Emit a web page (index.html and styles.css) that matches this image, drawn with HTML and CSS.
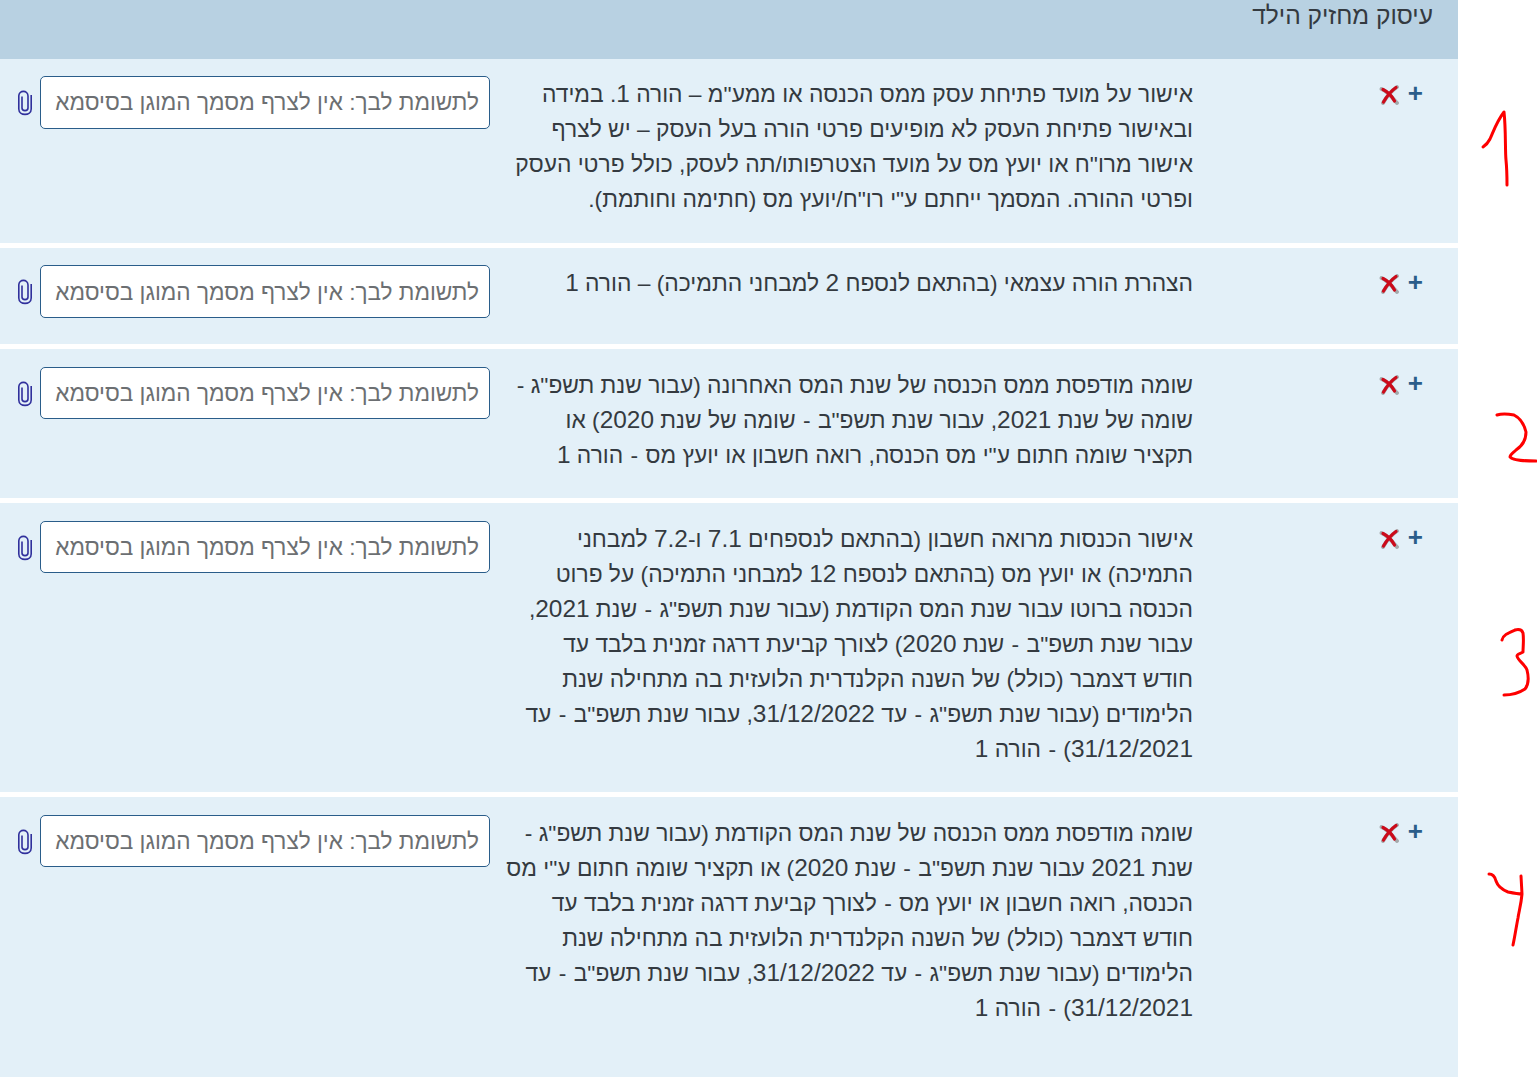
FILE: index.html
```html
<!DOCTYPE html>
<html lang="he" dir="rtl">
<head>
<meta charset="utf-8">
<title>עיסוק מחזיק הילד</title>
<link rel="stylesheet" href="styles.css">
</head>
<body>
<svg width="0" height="0" class="defs" aria-hidden="true">
  <defs>
    <symbol id="del" viewBox="0 0 20 20">
      <path d="M4 18 C8 11 12 6 18 2 M2.5 4 C8 6 13 12 18 18" fill="none" stroke="#8a8a8a" stroke-width="3.8" stroke-linecap="round" opacity=".7"/>
      <path d="M4.5 17 C8 11 12 6 17 2.5 M4 4.5 C9 7 13 11 15.5 16" fill="none" stroke="#cc0a1a" stroke-width="3.2" stroke-linecap="round"/>
    </symbol>
    <symbol id="clip" viewBox="0 0 16 26">
      <path d="M14.2 5 V19 C14.2 26.2 1.8 26.2 1.8 19 V6 C1.8 -.2 11 -.2 11 6 V18 C11 21.5 5 21.5 5 18 V6.5" fill="none" stroke="#30309c" stroke-width="1.6"/>
    </symbol>
  </defs>
</svg>
<main class="page">
  <header class="title-bar"><h1 class="title">עיסוק מחזיק הילד</h1></header>

  <section class="row">
    <div class="actions"><span class="plus">+</span><svg class="del"><use href="#del"/></svg></div>
    <p class="desc">אישור על מועד פתיחת עסק ממס הכנסה או ממע"מ – הורה <span class="num">1</span>. במידה<br>ובאישור פתיחת העסק לא מופיעים פרטי הורה בעל העסק – יש לצרף<br>אישור מרו"ח או יועץ מס על מועד הצטרפותו/תה לעסק, כולל פרטי העסק<br>ופרטי ההורה. המסמך ייחתם ע"י רו"ח/יועץ מס (חתימה וחותמת).</p>
    <input class="note" type="text" placeholder="לתשומת לבך: אין לצרף מסמך המוגן בסיסמא">
    <svg class="clip"><use href="#clip"/></svg>
  </section>

  <section class="row">
    <div class="actions"><span class="plus">+</span><svg class="del"><use href="#del"/></svg></div>
    <p class="desc">הצהרת הורה עצמאי (בהתאם לנספח <span class="num">2</span> למבחני התמיכה) – הורה <span class="num">1</span></p>
    <input class="note" type="text" placeholder="לתשומת לבך: אין לצרף מסמך המוגן בסיסמא">
    <svg class="clip"><use href="#clip"/></svg>
  </section>

  <section class="row">
    <div class="actions"><span class="plus">+</span><svg class="del"><use href="#del"/></svg></div>
    <p class="desc">שומה מודפסת ממס הכנסה של שנת המס האחרונה (עבור שנת תשפ"ג -<br>שומה של שנת <span class="num">2021</span>, עבור שנת תשפ"ב <span class="dash">-</span> שומה של שנת <span class="num">2020</span>) או<br>תקציר שומה חתום ע"י מס הכנסה, רואה חשבון או יועץ מס <span class="dash">-</span> הורה <span class="num">1</span></p>
    <input class="note" type="text" placeholder="לתשומת לבך: אין לצרף מסמך המוגן בסיסמא">
    <svg class="clip"><use href="#clip"/></svg>
  </section>

  <section class="row">
    <div class="actions"><span class="plus">+</span><svg class="del"><use href="#del"/></svg></div>
    <p class="desc">אישור הכנסות מרואה חשבון (בהתאם לנספחים <span class="num">7.1</span> ו-<span class="num">7.2</span> למבחני<br>התמיכה) או יועץ מס (בהתאם לנספח <span class="num">12</span> למבחני התמיכה) על פרוט<br>הכנסה ברוטו עבור שנת המס הקודמת (עבור שנת תשפ"ג <span class="dash">-</span> שנת <span class="num">2021</span>,<br>עבור שנת תשפ"ב <span class="dash">-</span> שנת <span class="num">2020</span>) לצורך קביעת דרגה זמנית בלבד עד<br>חודש דצמבר (כולל) של השנה הקלנדרית הלועזית בה מתחילה שנת<br>הלימודים (עבור שנת תשפ"ג <span class="dash">-</span> עד <span class="num">31/12/2022</span>, עבור שנת תשפ"ב <span class="dash">-</span> עד<br><span class="num">31/12/2021</span>) <span class="dash">-</span> הורה <span class="num">1</span></p>
    <input class="note" type="text" placeholder="לתשומת לבך: אין לצרף מסמך המוגן בסיסמא">
    <svg class="clip"><use href="#clip"/></svg>
  </section>

  <section class="row row-last">
    <div class="actions"><span class="plus">+</span><svg class="del"><use href="#del"/></svg></div>
    <p class="desc">שומה מודפסת ממס הכנסה של שנת המס הקודמת (עבור שנת תשפ"ג -<br>שנת <span class="num">2021</span> עבור שנת תשפ"ב <span class="dash">-</span> שנת <span class="num">2020</span>) או תקציר שומה חתום ע"י מס<br>הכנסה, רואה חשבון או יועץ מס <span class="dash">-</span> לצורך קביעת דרגה זמנית בלבד עד<br>חודש דצמבר (כולל) של השנה הקלנדרית הלועזית בה מתחילה שנת<br>הלימודים (עבור שנת תשפ"ג <span class="dash">-</span> עד <span class="num">31/12/2022</span>, עבור שנת תשפ"ב <span class="dash">-</span> עד<br><span class="num">31/12/2021</span>) <span class="dash">-</span> הורה <span class="num">1</span></p>
    <input class="note" type="text" placeholder="לתשומת לבך: אין לצרף מסמך המוגן בסיסמא">
    <svg class="clip"><use href="#clip"/></svg>
  </section>
</main>
<svg class="scribbles" viewBox="0 0 1537 1077" aria-hidden="true">
  <path d="M1483 147 C1486 145 1488 143 1490 139 C1494 130 1497 121 1504 112 C1506 130 1505 150 1506 160 C1507 170 1507 178 1507 185"/>
  <path d="M1497 415 C1503 413 1509 414 1514 415 C1520 418 1524 424 1526 432 C1526 440 1522 446 1516 450 C1513 453 1510 455 1510 457 C1514 461 1526 461 1536 461"/>
  <path d="M1502 640 C1503 635 1508 633 1515 630 C1519 629 1522 630 1523 633 C1524 640 1523 647 1523 652 C1520 654 1517 654 1517 656 C1518 661 1525 664 1527 670 C1529 678 1529 684 1525 689 C1519 693 1512 695 1504 695"/>
  <path d="M1489 874 C1493 874 1495 877 1496 881 C1498 887 1503 890 1508 892 C1513 893 1518 894 1522 894 M1521 876 L1522 894 C1521 905 1519 911 1518 918 C1516 928 1515 936 1513 945"/>
</svg>
</body>
</html>
```

FILE: styles.css
```css
html, body {
  margin: 0;
  height: 1077px;
  overflow: hidden;
  background: #fff;
}

body {
  position: relative;
  font-family: "Liberation Sans", Arial, sans-serif;
  color: #343a40;
}

.defs {
  position: absolute;
}

.page {
  width: 1458px;
  height: 1077px;
  margin-left: auto;
  margin-right: 79px;
  display: flex;
  flex-direction: column;
  gap: 5px;
}

.title-bar {
  height: 58.6px;
  margin-bottom: -5px;
  background: #b8d1e2;
  padding-right: 25px;
  box-sizing: border-box;
}

.title {
  margin: 0;
  font-size: 24.5px;
  font-weight: 400;
  line-height: 32px;
}

.row {
  display: grid;
  grid-template-columns: 265px 703px 450px 40px;
  align-items: start;
  min-height: 96.2px;
  box-sizing: border-box;
  padding: 18.6px 0 25.6px;
  background: #e3f0f8;
}

.row-last {
  flex: 1;
}

.actions {
  display: flex;
  align-items: center;
  gap: 10px;
  padding-right: 35px;
  height: 35px;
  margin-top: -1px;
}

.plus {
  width: 14px;
  color: #2a5d8a;
  font-size: 26px;
  font-weight: 700;
  line-height: 30px;
  text-align: center;
  margin-top: -2px;
}

.del {
  width: 20px;
  height: 20px;
  margin-top: 2px;
}

.desc {
  margin: 0;
  font-size: 22.8px;
  line-height: 35px;
}

.num {
  font-size: 24.4px;
  line-height: 1;
}

.dash {
  margin: 0 1px;
}

.note {
  width: 450px;
  height: 52.4px;
  margin-top: -1px;
  box-sizing: border-box;
  padding: 2px 10px 0;
  border: 1px solid #2a5d8a;
  border-radius: 5px;
  background: #fff;
  font-family: inherit;
  font-size: 22.6px;
  direction: rtl;
}

.note::placeholder {
  color: #6c6f72;
  opacity: 1;
}

.clip {
  width: 16px;
  height: 26px;
  margin: 13px 7px 0 0;
}

.scribbles {
  position: absolute;
  inset: 0;
  width: 1537px;
  height: 1077px;
  pointer-events: none;
  fill: none;
  stroke: #fe0000;
  stroke-width: 3;
  stroke-linecap: round;
  stroke-linejoin: round;
}
```
